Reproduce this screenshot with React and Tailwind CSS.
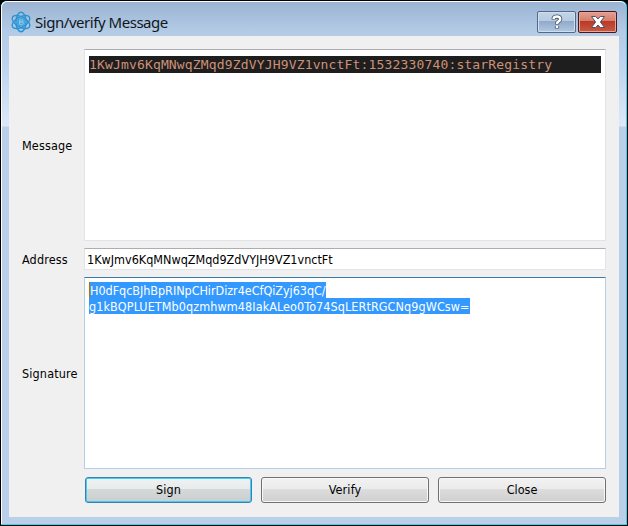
import React from "react";

function AtomIcon() {
  return (
    <svg className="h-[22px] w-[22px] shrink-0" viewBox="0 0 22 22" fill="none" stroke="#2994d2" strokeWidth="1.4">
      <ellipse cx="11" cy="11" rx="5" ry="9.8" />
      <ellipse cx="11" cy="11" rx="5" ry="9.8" transform="rotate(60 11 11)" />
      <ellipse cx="11" cy="11" rx="5" ry="9.8" transform="rotate(120 11 11)" />
      <circle cx="11" cy="11" r="4" fill="#3b9fd8" stroke="#4ba8dc" strokeWidth="1" />
      <path d="M9.5 8.8h2.2q1.5 0 1.5 1.1T11.7 11H9.5zm0 2.2h2.4q1.6 0 1.6 1.2t-1.6 1.1H9.5z" stroke="#a5d0ed" strokeWidth="0.8" />
    </svg>
  );
}

function CaptionButtons() {
  return (
    <div className="flex gap-[2px]">
      <button className="flex h-[22px] w-[39px] items-center justify-center rounded-[2px] border border-[#53698a] bg-[linear-gradient(#c3d4e7_0%,#b6cae1_46%,#91aac8_47%,#b0c8e3_100%)] shadow-[inset_0_0_0_1px_#d0deed]">
        <svg className="h-4 w-4" viewBox="0 0 16 16" fill="none">
          <path d="M4.7 5.6V4.4Q5 2.6 8 2.6t3.2 2.4q0 1.4-1.6 2.3T8 10.4M8 11.9v2.6" stroke="#485468" strokeWidth="4.2" />
          <path d="M4.7 5.1V4.4Q5 2.6 8 2.6t3.2 2.4q0 1.4-1.6 2.3T8 10M8 11.7v2.3" stroke="#fff" strokeWidth="2.5" />
        </svg>
      </button>
      <button className="flex h-[22px] w-[39px] items-center justify-center rounded-[2px] border border-[#481520] bg-[linear-gradient(#e5a092_0%,#d67b6b_46%,#b93a26_47%,#ca5a43_100%)] shadow-[inset_0_0_0_1px_#e6a79b]">
        <svg className="h-[14px] w-4" viewBox="0 0 16 14">
          <path d="M1.5 1.5h4.2L8 4l2.3-2.5h4.2L10.4 7l4.1 5.5h-4.2L8 10l-2.3 2.5H1.5L5.6 7z" fill="#fff" stroke="#505568" strokeWidth="1" />
        </svg>
      </button>
    </div>
  );
}

function Label({ children }) {
  return <div className="flex w-[75px] shrink-0 items-center pt-[2px] pl-[13px] text-[12.5px] tracking-[0.15px] whitespace-nowrap">{children}</div>;
}

export default function App() {
  return (
    <div className="h-[526px] w-[628px] bg-black font-['DejaVu_Sans_Condensed','DejaVu_Sans',sans-serif] font-stretch-condensed text-black">
      <div className="h-full w-full rounded-t-[7px] border border-black bg-[#38d2eb]">
        <div className="flex h-[523px] w-[625px] flex-col rounded-t-[6px] border-t border-l border-white bg-[linear-gradient(#9ab4d3_0px,#b4cbe6_30px,#bbd3ef_60px,#dce9f8_124px,#b9d0eb_125px,#b9d0eb_100%)] pr-[7px] pb-[7px] pl-[7px]">
          <header className="flex h-[34px] shrink-0 items-start justify-between pt-[9px] pl-px">
            <div className="flex items-center gap-[3px]">
              <AtomIcon />
              <h1 className="font-['Noto_Sans',sans-serif] text-[15px] leading-[22px] tracking-[-0.46px] whitespace-nowrap text-[#101820]">Sign/verify Message</h1>
            </div>
            <div className="pr-[2px]"><CaptionButtons /></div>
          </header>
          <main className="flex flex-1 flex-col bg-[#f0f0f0] pt-[13px] pr-[13px]">
            <div className="flex h-[192px]">
              <Label>Message</Label>
              <div className="flex-1 border border-[#e2e3ea] border-t-[#abadb3] bg-white px-1 pt-[6px]">
                <div className="h-[17px] bg-[#1e1e1e] font-['DejaVu_Sans_Mono',monospace] text-[13px] leading-[17px] tracking-[0.16px] whitespace-nowrap text-[#ce9178]">
                  1KwJmv6KqMNwqZMqd9ZdVYJH9VZ1vnctFt:1532330740:starRegistry
                </div>
              </div>
            </div>
            <div className="mt-[7px] flex h-[22px]">
              <Label>Address</Label>
              <div className="flex-1 border border-[#e2e3ea] border-t-[#abadb3] bg-white pl-[2px] text-[12.5px] leading-[22px] whitespace-nowrap">
                1KwJmv6KqMNwqZMqd9ZdVYJH9VZ1vnctFt
              </div>
            </div>
            <div className="mt-[7px] flex h-[192px]">
              <Label>Signature</Label>
              <div className="flex-1 border border-[#b5cfe7] border-t-[#3d7bad] bg-white px-1 pt-[4px] text-[12.5px] leading-[17px] whitespace-nowrap text-white">
                <div className="h-4 w-[237px] border-l border-[#cc6600] bg-[#3399ff] tracking-[-0.04px]">H0dFqcBJhBpRINpCHirDizr4eCfQiZyj63qC/</div>
                <div className="h-4 w-[381px] bg-[#3399ff] tracking-[0.08px]">g1kBQPLUETMb0qzmhwm48IakALeo0To74SqLERtRGCNq9gWCsw=</div>
              </div>
            </div>
            <div className="mt-2 ml-[76px] grid h-[26px] w-[521px] grid-cols-[167px_168px_168px] gap-[9px] text-[12.5px]">
              <button className="rounded-[3px] border border-[#3c7fb1] bg-[linear-gradient(#f0f2f2_0%,#e7ebeb_45%,#d5d9d9_46%,#cacece_100%)] pt-px tracking-[0.15px] shadow-[inset_0_0_0_1px_#42cdf4]">Sign</button>
              <button className="rounded-[3px] border border-[#707070] bg-[linear-gradient(#f2f2f2_0%,#ebebeb_45%,#dddddd_46%,#cfcfcf_100%)] pt-px tracking-[0.15px] shadow-[inset_0_0_0_1px_#f8f8f8]">Verify</button>
              <button className="rounded-[3px] border border-[#707070] bg-[linear-gradient(#f2f2f2_0%,#ebebeb_45%,#dddddd_46%,#cfcfcf_100%)] pt-px shadow-[inset_0_0_0_1px_#f8f8f8]">Close</button>
            </div>
          </main>
        </div>
      </div>
    </div>
  );
}
